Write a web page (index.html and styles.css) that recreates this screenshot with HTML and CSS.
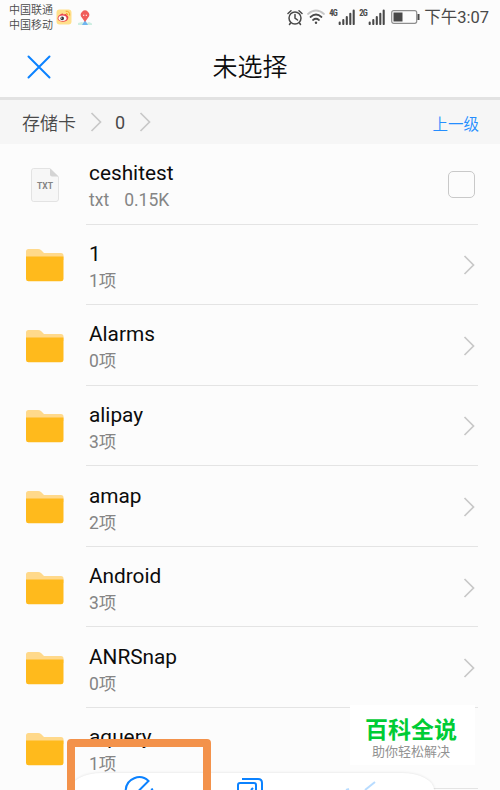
FILE: index.html
```html
<!DOCTYPE html>
<html lang="zh-CN">
<head>
<meta charset="utf-8">
<title>未选择</title>
<link rel="stylesheet" href="styles.css">
</head>
<body>
<svg class="defs" width="0" height="0">
  <symbol id="folder" viewBox="0 0 38 34">
    <path d="M0 10V3.500Q0 1 2.500 1H12Q14 1 15.300 2.300L18 5H35Q37.500 5 37.500 7.500V12H0Z" fill="#ffd98b"/>
    <path d="M0 8.500H37.500V31Q37.500 33.300 35 33.300H2.500Q0 33.300 0 31Z" fill="#ffba1c"/>
  </symbol>
  <symbol id="chevron" viewBox="0 0 12 20"><path d="M1.500 1L10.500 10L1.500 19" fill="none" stroke="#c8c8c8" stroke-width="1.700"/></symbol>
  <symbol id="signal" viewBox="0 0 17 16"><path d="M1.700 15V13.500M5.300 15V11M8.800 15V8M12.300 15V4.700M15.700 15V1.500" stroke="#494949" stroke-width="2.100" stroke-linecap="round"/></symbol>
</svg>
<div class="screen">
  <header class="status">
    <div class="carriers"><span>中国联通</span><span>中国移动</span></div>
    <svg class="weibo" viewBox="0 0 16 16">
      <rect x=".5" y=".5" width="15" height="15" rx="3" fill="#ffe08c"/>
      <path d="M1.500 9Q2 6.500 5 5Q7 4 7.500 5.500Q11 4 11 6.500Q13 7.500 12 10Q10.500 13 6.500 12.700Q1.500 12.300 1.500 9Z" fill="#ea4550"/>
      <ellipse cx="6.500" cy="9.200" rx="4" ry="2.700" fill="#fff"/>
      <circle cx="6.200" cy="9.400" r="1.800" fill="#333"/><circle cx="5.600" cy="9" r=".6" fill="#fff"/>
      <path d="M9.700 2.200Q14 2 13.700 6.500M10 4.300Q12 4.200 11.700 6.300" fill="none" stroke="#f9a82c" stroke-width="1"/>
    </svg>
    <svg class="pin" viewBox="0 0 16 16">
      <path d="M1 13L5 12L8 14L12 12L15 13.500V15H1Z" fill="#cceee1"/><path d="M5 15L8 10L11 15Z" fill="#6fb5ef"/>
      <path d="M8 12L4.800 7.500A4.200 4.200 0 1 1 11.200 7.500Z" fill="#f05d5b"/><path d="M6 5.300H7.300M8.700 5.300H10" stroke="#fff" stroke-width="1.100"/>
    </svg>
    <div class="indicators">
      <svg class="alarm" viewBox="0 0 16 16" fill="none" stroke="#494949" stroke-width="1.500" stroke-linecap="round"><circle cx="8" cy="8.500" r="6"/><path d="M8 5V8.700L10.500 10.500M1 4L4 1.300M12 1.300L15 4M3.500 13.500L2.500 15M12.500 13.500L13.500 15"/></svg>
      <svg class="wifi" viewBox="0 0 18 16" fill="none" stroke-width="1.700" stroke-linecap="round"><path d="M1 5Q9-2 17 5" stroke="#c6c6c6"/><path d="M3.500 8Q9 3 14.500 8M6 11Q9 8.500 12 11" stroke="#494949"/><circle cx="9" cy="13.700" r="1.200" fill="#494949" stroke="none"/></svg>
      <span class="net">4G</span><svg class="signal"><use href="#signal"/></svg>
      <span class="net">2G</span><svg class="signal"><use href="#signal"/></svg>
      <svg class="battery" viewBox="0 0 29 14"><rect x=".7" y=".7" width="25" height="12.600" rx="2" fill="none" stroke="#8e8e8e" stroke-width="1.200"/><rect x="2.500" y="2.500" width="9" height="9" fill="#494949"/><path d="M27.500 4V10" stroke="#494949" stroke-width="2"/></svg>
      <span class="clock">下午3:07</span>
    </div>
  </header>
  <div class="titlebar">
    <svg class="close" viewBox="0 0 24 24"><path d="M1.500 1.500L22.500 22.500M22.500 1.500L1.500 22.500" stroke="#0b82ff" stroke-width="2" stroke-linecap="round"/></svg>
    <h1>未选择</h1>
  </div>
  <nav class="crumbs">
    <span class="root">存储卡</span><svg class="chevron"><use href="#chevron"/></svg><span class="zero">0</span><svg class="chevron"><use href="#chevron"/></svg>
    <a>上一级</a>
  </nav>
  <main>
    <div class="row">
      <svg class="file" viewBox="0 0 28 34"><path d="M2.500 .5H19L27.500 9V31Q27.500 33.500 25 33.500H2.500Q.5 33.500 .5 31V3Q.5 .5 2.500 .5Z" fill="#f7f7f7" stroke="#e3e3e3"/><path d="M19 .5L27.500 8.500H21Q19 8.500 19 6.500Z" fill="#d4d4d4"/><text x="14" y="21" text-anchor="middle">TXT</text></svg>
      <div class="body"><div class="text"><b>ceshitest</b><small>txt<i></i>0.15K</small></div><span class="check"></span></div>
    </div>
    <div class="row"><svg class="folder"><use href="#folder"/></svg><div class="body"><div class="text"><b>1</b><small>1项</small></div><svg class="chevron"><use href="#chevron"/></svg></div></div>
    <div class="row"><svg class="folder"><use href="#folder"/></svg><div class="body"><div class="text"><b>Alarms</b><small>0项</small></div><svg class="chevron"><use href="#chevron"/></svg></div></div>
    <div class="row"><svg class="folder"><use href="#folder"/></svg><div class="body"><div class="text"><b>alipay</b><small>3项</small></div><svg class="chevron"><use href="#chevron"/></svg></div></div>
    <div class="row"><svg class="folder"><use href="#folder"/></svg><div class="body"><div class="text"><b>amap</b><small>2项</small></div><svg class="chevron"><use href="#chevron"/></svg></div></div>
    <div class="row"><svg class="folder"><use href="#folder"/></svg><div class="body"><div class="text"><b>Android</b><small>3项</small></div><svg class="chevron"><use href="#chevron"/></svg></div></div>
    <div class="row"><svg class="folder"><use href="#folder"/></svg><div class="body"><div class="text"><b>ANRSnap</b><small>0项</small></div><svg class="chevron"><use href="#chevron"/></svg></div></div>
    <div class="row"><svg class="folder"><use href="#folder"/></svg><div class="body"><div class="text"><b>aquery</b><small>1项</small></div></div></div>
  </main>
  <div class="toolbar">
    <svg viewBox="0 0 364 17" fill="none" stroke="#0b82ff" stroke-width="2">
      <path d="M55.700 17A13.500 13.500 0 0 1 78.500 8L69 17.500M81 17L83 16"/>
      <path d="M168 17V12Q168 10 170 10H184Q186 10 186 12V17M172 6H188Q192 6 192 10V17M181 17L183 15"/>
      <path d="M295 17L305 9M276 17L279 16" stroke="#b8dcff"/>
    </svg>
  </div>
  <div class="highlight"></div>
  <div class="watermark"><strong>百科全说</strong><span>助你轻松解决</span></div>
</div>
</body>
</html>
```
FILE: styles.css
```css
* { box-sizing: border-box; }
body { margin: 0; font-family: Roboto, "Noto Sans CJK SC", sans-serif; background: #fcfcfc; color: #0c0c0c; }
.defs { position: absolute; }
.screen { position: relative; width: 500px; height: 790px; overflow: hidden; background: #fcfcfc; }
svg { display: block; flex: none; }
.status { height: 34px; display: flex; align-items: center; padding: 0 11px 0 9px; color: #494949; }
.carriers { display: flex; flex-direction: column; font-size: 11px; line-height: 15px; font-weight: 350; margin-top: 2px; width: 47px; white-space: nowrap; }
.weibo { width: 16px; height: 16px; }
.pin { width: 16px; height: 16px; margin: 2px 0 0 5px; }
.indicators { margin-left: auto; display: flex; align-items: center; }
.alarm { width: 16px; height: 17px; }
.wifi { width: 18px; height: 16px; margin-left: 4px; }
.net { width: 9px; margin: -9px 0 0 4px; font: 700 8.500px/10px "Roboto Condensed", Roboto, sans-serif; letter-spacing: -.8px; }
.signal { width: 17px; height: 16px; }
.battery { width: 29px; height: 14px; margin-left: 6px; }
.clock { font-size: 16.500px; line-height: 24px; margin-left: 4px; padding-top: 1px; white-space: nowrap; }
.titlebar { height: 66px; border-bottom: 3px solid #e2e2e2; display: grid; grid-template-columns: 96px 1fr 96px; align-items: center; }
.close { width: 24px; height: 24px; margin: 2px 0 0 27px; }
h1 { margin: 4px 0 0; text-align: center; font-size: 25px; line-height: 36px; font-weight: 350; }
.crumbs { height: 44px; background: #f6f6f6; display: flex; align-items: center; padding: 0 21px 0 22px; font-size: 18px; color: #494949; }
.crumbs .chevron { margin-left: 14px; }
.root { font-weight: 350; }
.zero { margin-left: 13px; }
.crumbs a { margin-left: auto; color: #258eff; font-size: 15.500px; font-weight: 350; padding-top: 1px; }
.chevron { width: 12px; height: 20px; }
.row { height: 80.570px; display: flex; align-items: center; padding: 0 22px 0 26px; }
.row .chevron { margin-top: 2px; }
.folder { width: 38px; height: 34px; margin: 1px 22px 0 0; }
.file { width: 28px; height: 34px; margin: 1px 27px 0 5px; }
.file text { font: 700 8.500px Roboto, sans-serif; fill: #858585; }
.body { flex: 1; height: 100%; border-bottom: 1px solid #e4e4e4; display: flex; align-items: center; padding: 0 3px; }
.text { flex: 1; display: flex; flex-direction: column; gap: 0; padding-top: 6px; }
.text b { font-weight: 400; font-size: 20.800px; line-height: 27px; }
.text small { font-size: 17.500px; line-height: 26px; color: #858585; }
.text i { display: inline-block; width: 15px; }
.check { width: 27px; height: 27px; border: 1.500px solid #c9c9c9; border-radius: 5px; margin-top: 2px; }
.toolbar { position: absolute; left: 70px; top: 773px; width: 364px; height: 17px; background: #fff; border-radius: 32px 32px 0 0 / 17px 17px 0 0; box-shadow: 0 0 3px rgba(0,0,0,.12); }
.toolbar svg { width: 364px; height: 17px; }
.highlight { position: absolute; left: 67px; top: 739px; width: 144px; height: 70px; border: 8px solid #f3924b; border-radius: 4px; }
.watermark { position: absolute; left: 350px; top: 705px; width: 125px; height: 60px; background: #fff; display: flex; flex-direction: column; align-items: center; padding-top: 13px; }
.watermark strong { font-size: 23px; line-height: 25px; font-weight: 700; color: #00cc35; margin-left: -3px; }
.watermark span { font-size: 13px; line-height: 18px; color: #929292; margin-left: -3px; }
```
